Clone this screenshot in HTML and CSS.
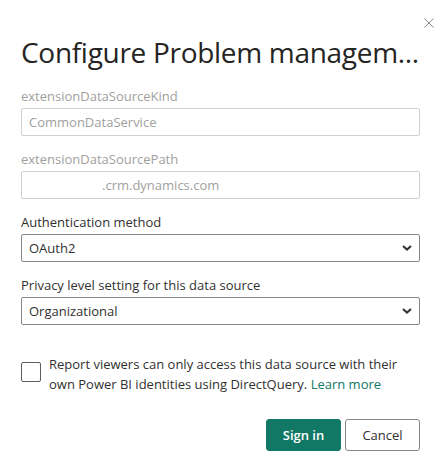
FILE: index.html
```html
<!DOCTYPE html>
<html>
<head>
<meta charset="utf-8">
<link rel="stylesheet" href="styles.css">
</head>
<body>
<div class="dialog">
  <button class="close" aria-label="Close">
    <svg width="10" height="10" viewBox="0 0 10 10"><path d="M0.5 0.5L9.5 9.5M9.5 0.5L0.5 9.5" stroke="#8a8886" stroke-width="1" fill="none"/></svg>
  </button>
  <h1 class="title">Configure Problem managem...</h1>

  <div class="field">
    <div class="label muted">extensionDataSourceKind</div>
    <div class="input disabled">CommonDataService</div>
  </div>
  <div class="field">
    <div class="label muted">extensionDataSourcePath</div>
    <div class="input disabled"><span class="redacted"></span>.crm.dynamics.com</div>
  </div>
  <div class="field">
    <div class="label">Authentication method</div>
    <div class="select">
      <span>OAuth2</span>
      <svg class="chev" width="10" height="6" viewBox="0 0 10 6"><path d="M1 1L5 4.6L9 1" stroke="#323130" stroke-width="2" fill="none"/></svg>
    </div>
  </div>
  <div class="field">
    <div class="label">Privacy level setting for this data source</div>
    <div class="select">
      <span>Organizational</span>
      <svg class="chev" width="10" height="6" viewBox="0 0 10 6"><path d="M1 1L5 4.6L9 1" stroke="#323130" stroke-width="2" fill="none"/></svg>
    </div>
  </div>

  <div class="check-row">
    <span class="checkbox"></span>
    <p class="check-text">Report viewers can only access this data source with their own Power BI identities using DirectQuery. <a class="link" href="#">Learn more</a></p>
  </div>

  <div class="actions">
    <button class="btn primary">Sign in</button>
    <button class="btn secondary">Cancel</button>
  </div>
</div>
</body>
</html>
```
FILE: styles.css
```css
* { box-sizing: border-box; }
html, body { margin: 0; padding: 0; background: #ffffff; }
body {
  font-family: "Open Sans", "Noto Sans", sans-serif;
  color: #323130;
}
.dialog {
  position: relative;
  width: 444px;
  height: 471px;
  padding: 0 24px 0 21px;
}
.close {
  position: absolute;
  top: 18px;
  right: 10px;
  width: 10px;
  height: 10px;
  padding: 0;
  border: none;
  background: transparent;
  display: flex;
}
.title {
  margin: 0;
  padding: 32px 0 0 0;
  font-size: 28px;
  font-weight: 400;
  letter-spacing: -0.3px;
  line-height: 40px;
  height: 86px;
  color: #252423;
  white-space: nowrap;
}
.field {
  display: flex;
  flex-direction: column;
  gap: 2px;
  margin-bottom: 13px;
}
.label {
  font-size: 13px;
  line-height: 20px;
  height: 20px;
  color: #323130;
}
.label.muted { color: #a19f9d; }
.input, .select {
  height: 28px;
  border-radius: 2px;
  font-size: 13px;
  line-height: 26px;
  padding: 0 7px;
  white-space: nowrap;
}
.input.disabled {
  border: 1px solid #d2d0ce;
  color: #a19f9d;
}
.redacted {
  display: inline-block;
  width: 73px;
}
.select {
  border: 1px solid #8a8886;
  display: flex;
  align-items: center;
  justify-content: space-between;
  color: #323130;
}
.check-row {
  display: flex;
  gap: 8px;
  margin-top: 29px;
  align-items: flex-start;
}
.checkbox {
  flex: none;
  width: 20px;
  height: 20px;
  margin-top: 8px;
  border: 1px solid #605e5c;
  border-radius: 2px;
}
.check-text {
  margin: 0;
  font-size: 13px;
  line-height: 20px;
  color: #323130;
}
.link {
  color: #117865;
  text-decoration: none;
}
.actions {
  display: flex;
  justify-content: flex-end;
  gap: 4px;
  margin-top: 25px;
}
.btn {
  height: 32px;
  width: 75px;
  border-radius: 3px;
  font-family: "Open Sans", "Noto Sans", sans-serif;
  font-size: 13px;
  padding: 0;
}
.primary {
  background: #117865;
  border: 1px solid #117865;
  color: #ffffff;
  font-weight: 600;
}
.secondary {
  background: #ffffff;
  border: 1px solid #8a8886;
  color: #323130;
  font-weight: 400;
}
```
